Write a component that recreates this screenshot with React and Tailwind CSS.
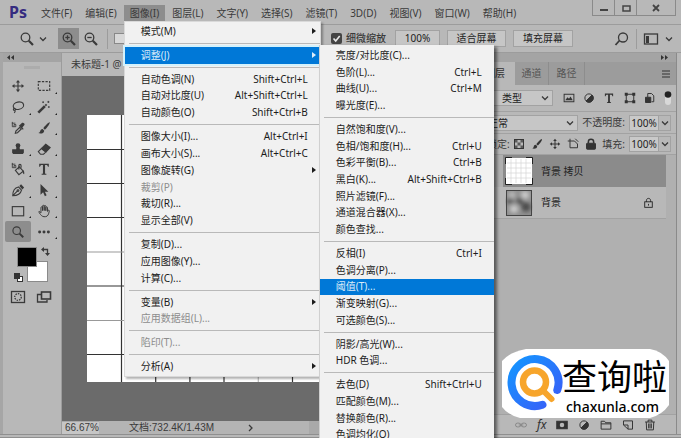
import React, { useState } from "react";
import clsx from "clsx";

const MENUS = ["文件(F)", "编辑(E)", "图像(I)", "图层(L)", "文字(Y)", "选择(S)", "滤镜(T)", "3D(D)", "视图(V)", "窗口(W)", "帮助(H)"];

// null = separator
const IMAGE_MENU = [
  { label: "模式(M)", sub: true },
  null,
  { label: "调整(J)", sub: true, active: true },
  null,
  { label: "自动色调(N)", keys: "Shift+Ctrl+L" },
  { label: "自动对比度(U)", keys: "Alt+Shift+Ctrl+L" },
  { label: "自动颜色(O)", keys: "Shift+Ctrl+B" },
  null,
  { label: "图像大小(I)...", keys: "Alt+Ctrl+I" },
  { label: "画布大小(S)...", keys: "Alt+Ctrl+C" },
  { label: "图像旋转(G)", sub: true },
  { label: "裁剪(P)", disabled: true },
  { label: "裁切(R)..." },
  { label: "显示全部(V)" },
  null,
  { label: "复制(D)..." },
  { label: "应用图像(Y)..." },
  { label: "计算(C)..." },
  null,
  { label: "变量(B)", sub: true },
  { label: "应用数据组(L)...", disabled: true },
  null,
  { label: "陷印(T)...", disabled: true },
  null,
  { label: "分析(A)", sub: true },
];

const ADJUST_MENU = [
  { label: "亮度/对比度(C)..." },
  { label: "色阶(L)...", keys: "Ctrl+L" },
  { label: "曲线(U)...", keys: "Ctrl+M" },
  { label: "曝光度(E)..." },
  null,
  { label: "自然饱和度(V)..." },
  { label: "色相/饱和度(H)...", keys: "Ctrl+U" },
  { label: "色彩平衡(B)...", keys: "Ctrl+B" },
  { label: "黑白(K)...", keys: "Alt+Shift+Ctrl+B" },
  { label: "照片滤镜(F)..." },
  { label: "通道混合器(X)..." },
  { label: "颜色查找..." },
  null,
  { label: "反相(I)", keys: "Ctrl+I" },
  { label: "色调分离(P)..." },
  { label: "阈值(T)...", active: true },
  { label: "渐变映射(G)..." },
  { label: "可选颜色(S)..." },
  null,
  { label: "阴影/高光(W)..." },
  { label: "HDR 色调..." },
  null,
  { label: "去色(D)", keys: "Shift+Ctrl+U" },
  { label: "匹配颜色(M)..." },
  { label: "替换颜色(R)..." },
  { label: "色调均化(Q)" },
];

function Icon({ children, className = "size-4", box = "0 0 16 16" }) {
  return (
    <svg viewBox={box} className={className} fill="none" stroke="currentColor" strokeWidth="1.3" aria-hidden="true">
      {children}
    </svg>
  );
}

const Chevron = () => (
  <Icon className="size-2 shrink-0" box="0 0 8 8"><path d="M1 2.5 4 5.5 7 2.5" /></Icon>
);

const Magnifier = ({ sign }) => (
  <Icon>
    <circle cx="6.5" cy="6.5" r="4.3" />
    <path d="M9.8 9.8 14 14" strokeWidth="2.2" />
    {sign && <path d="M4.3 6.5h4.4" />}
    {sign === "+" && <path d="M6.5 4.3v4.4" />}
  </Icon>
);

const MoveShape = () => (
  <>
    <path d="M8 3v10M3 8h10" />
    <path d="M8 1 5.6 4h4.8zM8 15l-2.4-3h4.8zM1 8l3-2.4v4.8zM15 8l-3-2.4v4.8z" fill="currentColor" stroke="none" />
  </>
);

const BrushShape = () => (
  <>
    <path d="M14.5 1.5c-1-.6-5.5 4.2-7.3 6.7L9 10c2.300-2 6.300-7.300 5.500-8.500z" fill="currentColor" stroke="none" />
    <path d="M6.500 9c-2 0-2.500 1.200-3 3-.3 1-1 1.600-2 1.800 2.500 1 6.500.6 6.800-2.800z" fill="currentColor" stroke="none" />
  </>
);

const AdjustShape = () => (
  <>
    <circle cx="8" cy="8" r="5.5" />
    <path d="M12 4A5.6 5.6 0 0 1 4 12z" fill="currentColor" />
  </>
);

const TypeShape = () => (
  <path d="M2.5 2h11v3.5h-1c-.3-1.5-.8-2-2-2H9.200v9c0 .8.300 1 1.500 1v1H5.300v-1c1.200 0 1.500-.2 1.500-1v-9H5.500c-1.200 0-1.700.5-2 2h-1z" fill="currentColor" stroke="none" />
);

const TOOLS = [
  { name: "移动", art: <MoveShape /> },
  { name: "矩形选框", corner: true, art: <rect x="1.5" y="3" width="13" height="10" strokeDasharray="2.6 1.5" /> },
  {
    name: "套索", corner: true, art: (
      <>
        <ellipse cx="8.5" cy="6.5" rx="6" ry="4.2" transform="rotate(-12 8.5 6.5)" />
        <path d="M4 9.5c-2 .5-1.500 2.500.3 2.200 1.300-.3.900-2-.3-2.200M4.500 11.700c.5 1 .2 2-.8 3" />
      </>
    ),
  },
  {
    name: "魔棒", corner: true, art: (
      <>
        <path d="M1.5 14.5 9 7" strokeWidth="3" />
        <path d="M9.5 6.500 11 5" strokeWidth="2" />
        <path d="M7 1.500v2M6 2.500h2M13 1v2.400M11.800 2.200h2.400M13.500 7v2M12.500 8h2" strokeWidth="1" />
      </>
    ),
  },
  {
    name: "吸管", art: (
      <>
        <path d="M1 2.5h4M1.500 1v5.500h4V4h-2v2" strokeWidth="1" />
        <path d="m5 14 .6-2.400L10 7.200 11.800 9l-4.400 4.400z" />
        <path d="m9 5.500 4.500 4.500 1-1L13 7.500l2.300-2.800c.8-1.600-1-3.400-2.600-2.600L10 4.500z" fill="currentColor" stroke="none" />
      </>
    ),
  },
  { name: "画笔", corner: true, art: <BrushShape /> },
  {
    name: "仿制图章", corner: true, art: (
      <>
        <circle cx="8" cy="4" r="2.7" fill="currentColor" stroke="none" />
        <path d="M7 5h2l.5 4H14v3H2V9h4.500zM2 13.200h12" fill="currentColor" />
      </>
    ),
  },
  {
    name: "橡皮擦", corner: true, art: (
      <>
        <path d="M1.5 11 5 7.500l5 4L7.500 14H4z" />
        <path d="M5.5 7 10 2.500l5 3.800L10.500 11z" fill="currentColor" />
      </>
    ),
  },
  {
    name: "油漆桶", corner: true, art: (
      <>
        <path d="M1 2.5h4M1.500 1v5.500h4V4h-2v2" strokeWidth="1" />
        <path d="m5 9.500 4.500-4 4.500 5-5 4z" />
        <path d="M9 8.500V4.200c0-2 2.500-2 2.500 0v2.500" />
        <path d="M13.500 9c1.500 1 2 3 1.500 5-1-.5-1.500-1-1.500-3z" fill="currentColor" stroke="none" />
      </>
    ),
  },
  { name: "文字", corner: true, art: <TypeShape /> },
  {
    name: "钢笔", corner: true, art: (
      <>
        <path d="M2 14.500c0-5 1.500-9 6.500-10l3.500 3.600c-1 4.400-4.500 6.400-10 6.400zM2 14.500 7.500 9" />
        <circle cx="8" cy="8.7" r="1" />
        <path d="m9.500 3.500 2-2 3.500 3.500-2 2.300z" fill="currentColor" stroke="none" />
      </>
    ),
  },
  { name: "路径选择", corner: true, art: <path d="M4 1v12.500l3-2.800 2 4.300 2-1-2-4.100h4z" fill="currentColor" stroke="none" /> },
  { name: "矩形", corner: true, art: <rect x="1.5" y="3" width="13" height="10.5" /> },
  {
    name: "抓手", corner: true, art: (
      <path d="M4.500 10V4.200c0-1.400 1.800-1.400 1.800 0V7.500 2.500c0-1.400 1.900-1.400 1.900 0v5V2.700c0-1.400 1.900-1.400 1.900 0v5-3.500c0-1.300 1.900-1.300 1.900 0V8.500c.3-1.800 2.200-2 2-.4-.5 3.200-1.500 6.400-4.500 6.400H8c-2 0-3.600-1.800-5.300-4.300-1.300-1.800-.4-2.700 1.800-.2" strokeWidth="1.1" />
    ),
  },
  { name: "缩放", active: true, art: <><circle cx="6.5" cy="6.5" r="4.3" /><path d="M9.8 9.8 14 14" strokeWidth="2.2" /></> },
  {
    name: "更多工具", corner: true, art: (
      <g fill="currentColor" stroke="none"><circle cx="3" cy="8" r="1.7" /><circle cx="8" cy="8" r="1.7" /><circle cx="13" cy="8" r="1.7" /></g>
    ),
  },
];

function MenuList({ items, className, children }) {
  return (
    <div role="menu" className={clsx("absolute flex flex-col bg-[#f1f1f1] text-[#1c1c1c]", className)}>
      {items.map((item, i) =>
        item ? (
          <button
            key={i}
            role="menuitem"
            disabled={item.disabled}
            className={clsx(
              "flex min-h-0 flex-1 items-center whitespace-nowrap pl-4 pr-3 text-left",
              item.active && "bg-[#0078d7] text-[#dcecf9]",
              item.active && item.sub && "outline-2 outline-[#d4f1fb]",
              item.disabled && "text-[#8d8d8d]",
            )}
          >
            <span className="flex-1">{item.label}</span>
            {item.keys && <span>{item.keys}</span>}
            {item.sub && (
              <svg viewBox="0 0 4 6" className="-mr-2 h-2 w-1" fill="currentColor" aria-hidden="true">
                <path d="M0 0l4 3-4 3z" />
              </svg>
            )}
          </button>
        ) : (
          <div key={i} role="separator" className="flex h-[7px] shrink-0 items-center pl-1">
            <div className="h-px w-full bg-[#b9b9b9]" />
          </div>
        ),
      )}
      {children}
    </div>
  );
}

function MenuBar() {
  return (
    <header className="flex h-[25px] shrink-0 items-start border-b border-[#9c9c9c]">
      <div className="w-[35px] pl-[9px] text-base/6 font-bold text-[#352b80]">Ps</div>
      <nav className="flex flex-1 gap-px pt-[5px]">
        {MENUS.map((name) => (
          <div key={name} className="relative">
            <button className={clsx("h-4 whitespace-nowrap px-[6px]", name === "图像(I)" && "bg-[#8d8d8d]")}>{name}</button>
            {name === "图像(I)" && (
              <MenuList
                items={IMAGE_MENU}
                className="left-0 top-4 z-20 h-[356px] w-[197px] border border-[#d9d9d9] py-px shadow-[2px_2px_2px_rgba(0,0,0,0.3)]"
              >
                <MenuList
                  items={ADJUST_MENU}
                  className="left-[194px] top-[23px] z-30 h-[400px] w-[175px] border-l border-[#d0d0d0] py-[2px] shadow-[3px_2px_3px_rgba(0,0,0,0.5)]"
                />
              </MenuList>
            )}
          </div>
        ))}
      </nav>
      <div className="mr-[5px] flex h-4 border-x border-b border-[#8a8a8a] text-[#444]">
        <button aria-label="最小化" className="flex w-[22px] items-center justify-center border-r border-[#8a8a8a]">
          <Icon className="size-3" box="0 0 12 12"><path d="M2 8h8" strokeWidth="2" /></Icon>
        </button>
        <button aria-label="最大化" className="flex w-[22px] items-center justify-center border-r border-[#8a8a8a]">
          <Icon className="size-3" box="0 0 12 12"><rect x="3" y="4" width="7" height="5" strokeWidth="1.5" /></Icon>
        </button>
        <button aria-label="关闭" className="flex w-[38px] items-center justify-center">
          <Icon className="size-3" box="0 0 12 12"><path d="m3 3 6 6M9 3 3 9" strokeWidth="1.8" /></Icon>
        </button>
      </div>
    </header>
  );
}

function OptionsBar() {
  const [scrubby, setScrubby] = useState(true);
  const [resize, setResize] = useState(false);
  const action = "h-[17px] whitespace-nowrap border border-[#a2a2a2] bg-[#c6c6c6] text-[#222]";

  return (
    <div className="flex h-7 shrink-0 items-center border-b border-[#9c9c9c] pr-2">
      <div className="flex w-[58px] shrink-0 items-center gap-1 pl-[19px]"><Magnifier /><Chevron /></div>
      <button aria-label="放大" className="flex h-[21px] w-[21px] shrink-0 items-center justify-center bg-[#8d8d8d]"><Magnifier sign="+" /></button>
      <button aria-label="缩小" className="ml-1 flex shrink-0 justify-center"><Magnifier sign="-" /></button>
      <div className="ml-2 h-5 w-px bg-[#9c9c9c]" />
      <div className="ml-[6px] flex w-[217px] shrink-0 items-center">
        <input type="checkbox" aria-label="调整窗口大小以满屏显示" checked={resize} onChange={(e) => setResize(e.target.checked)} className="size-[11px] appearance-none border border-[#888] bg-[#d8d8d8]" />
      </div>
      <label className="flex shrink-0 items-center gap-1 whitespace-nowrap font-medium">
        <span className="relative flex size-[11px]">
          <input type="checkbox" checked={scrubby} onChange={(e) => setScrubby(e.target.checked)} className="size-full appearance-none rounded-xs bg-[#d8d8d8] checked:bg-[#444]" />
          {scrubby && (
            <svg viewBox="0 0 11 11" className="pointer-events-none absolute inset-0" fill="none" stroke="#e8e8e8" strokeWidth="1.6"><path d="m2.5 5.500 2.200 2.400 4-5" /></svg>
          )}
        </span>
        细微缩放
      </label>
      <div className="ml-[9px] flex shrink-0 gap-[7px]">
        <button className={clsx(action, "w-[45px]")}>100%</button>
        <button className={clsx(action, "w-[59px]")}>适合屏幕</button>
        <button className={clsx(action, "w-[60px]")}>填充屏幕</button>
      </div>
      <div className="ml-auto flex shrink-0 items-center gap-[6px]">
        <button aria-label="搜索"><Icon className="block size-4"><circle cx="9" cy="6.5" r="4.5" /><path d="M5.5 9.500 1.500 14" strokeWidth="1.8" /></Icon></button>
        <div className="h-5 w-px bg-[#9c9c9c]" />
        <button aria-label="工作区" className="flex items-center gap-[6px]">
          <Icon><rect x="1.5" y="3" width="13" height="10" /><path d="M3 5h3v7H3z" fill="currentColor" stroke="none" /></Icon>
          <Chevron />
        </button>
      </div>
    </div>
  );
}

function ToolBox() {
  return (
    <aside className="flex w-[59px] shrink-0 flex-col border-r border-[#9c9c9c]">
      <div className="flex h-[9px] items-center bg-[#a4a4a4] pl-1">
        <svg viewBox="0 0 8 5" className="h-[5px] w-2" fill="#333"><path d="M3 0v5L0 2.500zM7 0v5L4 2.500z" /></svg>
      </div>
      <div className="mx-auto mt-1 h-[3px] w-4 bg-[#acacac]" />
      <div className="mt-[7px] grid h-[166px] grid-cols-2 grid-rows-8 pl-[2px] pr-1">
        {TOOLS.map((tool) => (
          <button key={tool.name} aria-label={tool.name} className={clsx("relative flex items-center justify-center", tool.active && "rounded-xs bg-[#8d8d8d]")}>
            <Icon className="size-[14px]">{tool.art}</Icon>
            {tool.corner && <svg viewBox="0 0 2 2" className="absolute bottom-[3px] right-0 size-[2px]" fill="#222"><path d="M2 0v2H0z" /></svg>}
          </button>
        ))}
      </div>
      <div className="relative mx-auto mt-[5px] h-[35px] w-9">
        <button aria-label="背景色" className="absolute bottom-0 right-[2px] size-[21px] border border-[#8a8a8a] bg-white" />
        <button aria-label="前景色" className="absolute left-[3px] top-0 size-5 border border-[#8a8a8a] bg-black" />
        <button aria-label="切换颜色" className="absolute right-0 top-0">
          <Icon className="block size-[9px]" box="0 0 9 9"><path d="M1.5 2.500h5v5" /><path d="M3 0v5L0 2.500zM4 6h5L6.500 9z" fill="currentColor" stroke="none" /></Icon>
        </button>
        <button aria-label="默认颜色" className="absolute bottom-0 left-0">
          <svg viewBox="0 0 9 9" className="block size-[9px]"><rect x="3.5" y="3.5" width="5" height="5" fill="#fff" stroke="#333" /><rect width="6" height="6" fill="#333" /></svg>
        </button>
      </div>
      <div className="mt-[7px] grid grid-cols-2 pl-[2px] pr-1">
        <button aria-label="快速蒙版" className="flex justify-center">
          <Icon><rect x="1.5" y="2.5" width="13" height="11" /><circle cx="8" cy="8" r="3.3" strokeDasharray="1.5 1" /></Icon>
        </button>
        <button aria-label="屏幕模式" className="flex justify-center">
          <Icon><path d="M5 5.500H1.500V13H11v-2" /><rect x="5.5" y="3" width="9" height="7" strokeWidth="1.6" /></Icon>
        </button>
      </div>
    </aside>
  );
}

const COLUMNS = [34.5, 68.7, 102.9, 137, 171.3, 205.5, 239.7, 273.9, 308, 342];
const ROWS = [34.5, 68.5, 102.5, 137, 171, 205.5, 239.5];

function DocumentArea() {
  return (
    <main className="flex min-w-0 flex-1 flex-col">
      <div className="flex h-[23px] shrink-0 items-end bg-[#a4a4a4]">
        <button className="h-[23px] w-44 whitespace-nowrap border-r border-[#8a8a8a] bg-[#b8b8b8] pl-[9px] text-left">未标题-1 @</button>
      </div>
      <div className="min-h-0 flex-1 overflow-hidden bg-[#6b6b6b] pl-[25px] pt-[39px]">
        <svg viewBox="0 0 376 267" className="block h-[267px] w-[376px]">
          <rect width="376" height="267" fill="#fff" />
          {COLUMNS.map((x, i) => (
            <path key={x} d={`M${x} 0V267`} stroke={i === 4 ? "#bbb" : "#333"} strokeWidth="1.2" />
          ))}
          {ROWS.map((y, i) => (
            <path key={y} d={`M0 ${y}H376`} stroke={i === 3 || i === 5 ? "#999" : "#333"} strokeWidth="1.2" />
          ))}
        </svg>
      </div>
      <footer className="flex h-[13px] shrink-0 items-center bg-[#a9a9a9] font-['Liberation_Sans','Noto_Sans_CJK_SC',sans-serif]">
        <input aria-label="缩放比例" defaultValue="66.67%" className="h-3 w-[37px] bg-[#c6c6c6] pl-[3px]" />
        <span className="flex h-full w-[210px] items-center bg-[#b4b4b4] pl-[30px]">
          文档:732.4K/1.43M
          <Icon className="ml-8 size-2" box="0 0 8 8"><path d="m3 1 3 3-3 3" /></Icon>
        </span>
      </footer>
    </main>
  );
}

function PercentField({ label }) {
  return (
    <label className="ml-auto flex items-center whitespace-nowrap">
      {label}
      <input defaultValue="100%" className="ml-1 h-4 w-[30px] border border-[#a2a2a2] bg-[#c9c9c9] text-center text-[#222]" />
      <span className="flex h-4 w-3 items-center justify-center border-y border-r border-[#a2a2a2]"><Chevron /></span>
    </label>
  );
}

function LayersPanel() {
  const select = "h-4 w-full appearance-none border border-[#a2a2a2] bg-[#c6c6c6] text-[#222]";
  return (
    <aside className="mr-1 flex w-[203px] shrink-0 flex-col border-x border-[#8a8a8a]">
      <div className="flex h-[9px] shrink-0 items-center justify-end bg-[#a4a4a4] pr-2">
        <svg viewBox="0 0 8 5" className="h-[5px] w-2" fill="#333"><path d="M1 0v5l3-2.500zM5 0v5l3-2.500z" /></svg>
      </div>
      <div className="flex h-[23px] shrink-0 bg-[#9c9c9c] text-[#555]">
        <button className="w-10 bg-[#b8b8b8] text-[#333]">图层</button>
        <button className="w-[34px] border-r border-[#8d8d8d]">通道</button>
        <button className="w-9 border-r border-[#8d8d8d]">路径</button>
        <button aria-label="面板菜单" className="ml-auto mr-[6px]"><Icon className="size-2" box="0 0 8 8"><path d="M0 1h8M0 4h8M0 7h8" /></Icon></button>
      </div>

      <div className="flex h-[27px] shrink-0 items-center border-b border-[#a2a2a2] pl-1 pr-1">
        <div className="relative w-[74px]">
          <select aria-label="滤镜类型" className={clsx(select, "pl-[22px]")}><option>类型</option></select>
          <span className="pointer-events-none absolute right-1 top-1"><Chevron /></span>
        </div>
        <div className="ml-[10px] flex flex-1 items-center justify-between text-[#333]">
          <Icon className="size-3"><rect x="1.5" y="3" width="13" height="10" /><path d="m3 11 3-4 2 2 2-3 3 5z" fill="currentColor" stroke="none" /></Icon>
          <Icon className="size-3"><AdjustShape /></Icon>
          <Icon className="size-3"><TypeShape /></Icon>
          <Icon className="size-3"><rect x="3" y="3" width="10" height="10" /><path d="M1 1h4v4H1zM11 1h4v4h-4zM1 11h4v4H1zM11 11h4v4h-4z" fill="currentColor" stroke="none" /></Icon>
          <Icon className="size-3"><path d="M5 7V2h5l3 3v8h-3" /><path d="M2 7h7v7H2z" fill="currentColor" /></Icon>
          <svg viewBox="0 0 8 14" className="h-[14px] w-2"><rect x="1" width="6" height="14" rx="3" fill="#d8d8d8" /><circle cx="4" cy="3.5" r="3.3" fill="#222" /></svg>
        </div>
      </div>

      <div className="flex h-[22px] shrink-0 items-center border-b border-[#a2a2a2] pl-1 pr-[5px]">
        <div className="relative w-[99px]">
          <select aria-label="混合模式" className={clsx(select, "pl-2")}><option>正常</option></select>
          <span className="pointer-events-none absolute right-1 top-1"><Chevron /></span>
        </div>
        <PercentField label="不透明度:" />
      </div>

      <div className="flex h-[21px] shrink-0 items-center border-b border-[#a2a2a2] pl-3 pr-[5px]">
        <span className="w-[26px] whitespace-nowrap">锁定:</span>
        <div className="flex items-center gap-[6px] text-[#333]">
          <Icon className="size-3"><rect x="2" y="2" width="12" height="12" /><path d="M2 2h4v4H2zM10 2h4v4h-4zM6 6h4v4H6zM2 10h4v4H2zM10 10h4v4h-4z" fill="currentColor" stroke="none" opacity=".7" /></Icon>
          <Icon className="size-3"><BrushShape /></Icon>
          <Icon className="size-3"><MoveShape /></Icon>
          <Icon className="size-3"><path d="M1 4h7M4 1v12h10V8l-4-4H8M11 1l4 4" /></Icon>
          <Icon className="size-3"><rect x="2" y="7" width="12" height="8" rx="1" fill="currentColor" /><path d="M4.5 7V5c0-4.500 7-4.500 7 0v2" strokeWidth="2" /></Icon>
        </div>
        <PercentField label="填充:" />
      </div>

      <ul className="min-h-0 flex-1 bg-[#b0b0b0] pr-[10px]">
        <li className="pl-7">
          <button className="flex h-8 w-full items-center gap-2 bg-[#8b8b8b] pl-[2px] text-[#222]">
            <svg viewBox="0 0 28 28" className="size-7">
              <rect x="1" y="1" width="26" height="26" fill="#fff" />
              <path d="M6 2v24M11 2v24M16 2v24M21 2v24M2 6h24M2 11h24M2 16h24M2 21h24" stroke="#d4d4d4" strokeWidth=".7" />
              <path d="M.5 7V.5H7M21 .5h6.500V7M27.500 21v6.500H21M7 27.500H.5V21" fill="none" stroke="#222" />
            </svg>
            背景 拷贝
          </button>
        </li>
        <li className="border-b border-[#a2a2a2] bg-[#b8b8b8] pl-7">
          <button className="flex h-[31px] w-full items-center gap-2 pl-[2px] text-[#222]">
            <svg viewBox="0 0 28 28" className="size-7">
              <defs><filter id="soft"><feGaussianBlur stdDeviation="2" /></filter></defs>
              <rect x="1" y="1" width="26" height="26" fill="#8f8f8f" />
              <g filter="url(#soft)">
                <circle cx="7" cy="6" r="3.5" fill="#bbb" /><circle cx="20" cy="6" r="4" fill="#ccc" />
                <circle cx="15" cy="12" r="3.5" fill="#555" /><circle cx="5" cy="12" r="3" fill="#555" />
                <circle cx="9" cy="20" r="4" fill="#ccc" /><circle cx="21" cy="18" r="4.5" fill="#4a4a4a" />
              </g>
              <rect x="1.5" y="1.5" width="25" height="25" fill="none" stroke="#444" />
            </svg>
            背景
            <Icon className="ml-auto mr-3 size-[11px]"><rect x="2.5" y="7" width="11" height="8" /><path d="M5 7V5c0-4 6-4 6 0v2M8 10v2.500" /></Icon>
          </button>
        </li>
      </ul>

      <div className="flex h-5 shrink-0 items-center justify-between border-t border-[#a2a2a2] pl-10 pr-5 text-[#333]">
        <button aria-label="链接图层" className="text-[#888]"><Icon className="size-3"><rect x=".7" y="5.5" width="7" height="5" rx="2.5" /><rect x="8.3" y="5.5" width="7" height="5" rx="2.5" /><path d="M5 8h6" /></Icon></button>
        <button className="font-['Noto_Sans',sans-serif] text-xs/3 italic">fx</button>
        <button aria-label="添加蒙版"><Icon className="size-3"><rect x="1" y="3" width="14" height="10" fill="currentColor" /><circle cx="8" cy="8" r="3" fill="#b8b8b8" stroke="none" /></Icon></button>
        <button aria-label="调整图层"><Icon className="size-3"><AdjustShape /></Icon></button>
        <button aria-label="新建组"><Icon className="size-3"><path d="M1.5 13.500V3H6l1.500 2h7v8.500zM1.500 6.500h13" /></Icon></button>
        <button aria-label="新建图层"><Icon className="size-3"><path d="M2 2.500h12v11H8L2 8zM8 13.500V8H2" /></Icon></button>
        <button aria-label="删除图层"><Icon className="size-3"><path d="M1.5 4h13M5.500 4V1.500h5V4M3 4l.5 10.500h9L13 4M6.200 6v6.500M8 6v6.500M9.800 6v6.500" /></Icon></button>
      </div>
    </aside>
  );
}

// Site stamp floating over the lower right corner
function Watermark() {
  return (
    <div className="absolute bottom-5 right-3 z-40 h-[69px] w-[167px] text-black">
      <svg viewBox="0 0 167 69" className="absolute inset-0 size-full">
        <defs>
          <linearGradient id="ring" x1="0" y1="0" x2="1" y2="1"><stop offset="0" stopColor="#1496ff" /><stop offset="1" stopColor="#3a5cf7" /></linearGradient>
        </defs>
        <path d="M0 12Q8 3 24 0H148Q160 2 167 12V56Q160 66 148 69H18Q6 66 0 58Z" fill="#fff" />
        <path d="M55.300 41A23.500 23.500 0 1 0 40.500 55.800" fill="none" stroke="url(#ring)" strokeWidth="8" strokeLinecap="round" />
        <circle cx="32.5" cy="33" r="11.5" fill="none" stroke="#f7a52b" strokeWidth="6.5" />
        <path d="m41 41.500 8.500 8.500" stroke="#f7a52b" strokeWidth="6" strokeLinecap="round" />
      </svg>
      <div className="relative flex h-full flex-col whitespace-nowrap pl-[60px] pt-2">
        <span className="text-[35px]/10">查询啦</span>
        <span className="pl-1 text-sm/5 font-medium">chaxunla.com</span>
      </div>
    </div>
  );
}

export default function App() {
  return (
    <div className="relative flex h-screen flex-col overflow-hidden bg-[#b8b8b8] font-['Noto_Sans','Noto_Sans_CJK_SC',sans-serif] text-[10px] text-[#3a3a3a]">
      <MenuBar />
      <OptionsBar />
      <div className="flex min-h-0 flex-1 border-l-[3px] border-[#a6a6a6]">
        <ToolBox />
        <DocumentArea />
        <LayersPanel />
      </div>
      <div className="h-1 shrink-0 border-y border-[#8f8f8f]" />
      <Watermark />
    </div>
  );
}
